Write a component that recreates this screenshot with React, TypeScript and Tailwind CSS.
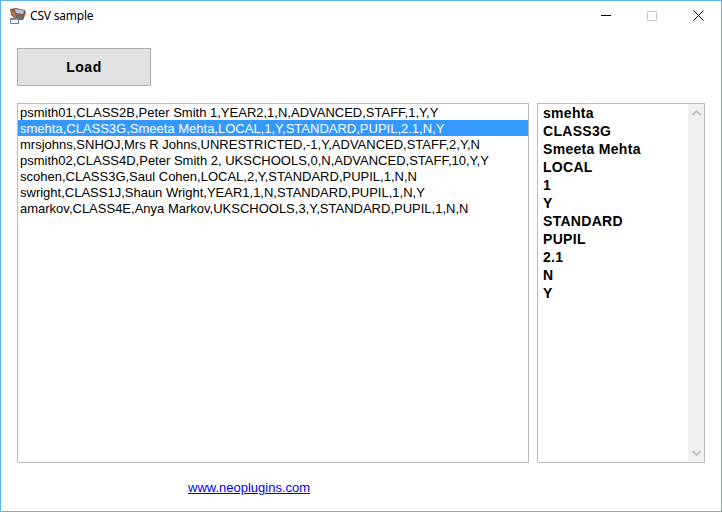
const rows = [
  'psmith01,CLASS2B,Peter Smith 1,YEAR2,1,N,ADVANCED,STAFF,1,Y,Y',
  'smehta,CLASS3G,Smeeta Mehta,LOCAL,1,Y,STANDARD,PUPIL,2.1,N,Y',
  'mrsjohns,SNHOJ,Mrs R Johns,UNRESTRICTED,-1,Y,ADVANCED,STAFF,2,Y,N',
  'psmith02,CLASS4D,Peter Smith 2, UKSCHOOLS,0,N,ADVANCED,STAFF,10,Y,Y',
  'scohen,CLASS3G,Saul Cohen,LOCAL,2,Y,STANDARD,PUPIL,1,N,N',
  'swright,CLASS1J,Shaun Wright,YEAR1,1,N,STANDARD,PUPIL,1,N,Y',
  'amarkov,CLASS4E,Anya Markov,UKSCHOOLS,3,Y,STANDARD,PUPIL,1,N,N',
];

const fields = ['smehta', 'CLASS3G', 'Smeeta Mehta', 'LOCAL', '1', 'Y', 'STANDARD', 'PUPIL', '2.1', 'N', 'Y'];

function AppIcon() {
  return (
    <svg width="18" height="18" viewBox="0 0 18 18" className="shrink-0">
      <path d="M1 2l6-1 9 2 1 3-3 7H7L2 8z" fill="#8a5a44" />
      <path d="M6 2l9 1.500-1 3.500-7-1z" fill="#a9c8d8" />
      <path d="M2 4l4 1 1 6-3-1z" fill="#b5764f" />
      <path d="M9 8l6 .5-1 4H9z" fill="#6d6a68" />
      <rect x="1.500" y="11.500" width="8" height="5" fill="#f2f4fa" stroke="#6f7f9f" />
      <rect x="2" y="12" width="7" height="1" fill="#7f93c0" />
    </svg>
  );
}

export default function App() {
  return (
    <div className="w-[722px] h-[512px] flex flex-col bg-white border border-[#5fb5ee] font-['Liberation_Sans',Arial,sans-serif] text-black overflow-hidden">
      <div className="h-[29px] flex items-center shrink-0 pl-[8px]">
        <AppIcon />
        <span className="ml-[3px] text-[12px] font-['Noto_Sans',sans-serif] tracking-[-0.2px]">CSV sample</span>
        <div className="ml-auto flex items-center">
          <span className="w-[46px] flex justify-center">
            <span className="block w-[10px] h-px bg-black" />
          </span>
          <span className="w-[46px] flex justify-center">
            <span className="block w-[10px] h-[10px] border border-[#cccccc]" />
          </span>
          <span className="w-[46px] flex justify-center">
            <svg width="11" height="11" viewBox="0 0 11 11">
              <path d="M.5.500l10 10M10.500.500l-10 10" stroke="#111" strokeWidth="1" fill="none" />
            </svg>
          </span>
        </div>
      </div>

      <div className="flex-1 flex flex-col pl-[16px] pr-[16px] pt-[18px]">
        <button className="w-[134px] h-[38px] bg-[#e1e1e1] border border-[#adadad] text-[14px] font-bold tracking-[0.5px] shrink-0">
          Load
        </button>

        <div className="flex gap-[8px] mt-[17px]">
          <div className="w-[512px] h-[360px] border border-[#bcbcbc] text-[13px] leading-[18px]">
            {rows.map((row, i) => (
              <div
                key={row}
                className={i === 1 ? 'h-[16px] pl-[2px] whitespace-pre bg-[#3399ff] text-white' : 'h-[16px] pl-[2px] whitespace-pre'}
              >
                {row}
              </div>
            ))}
          </div>

          <div className="w-[168px] h-[360px] border border-[#bcbcbc] flex text-[14px] font-bold leading-[18px] tracking-[0.3px]">
            <div className="flex-1 pl-[5px]">
              {fields.map((f, i) => (
                <div key={i} className="h-[18px]">{f}</div>
              ))}
            </div>
            <div className="w-[16px] bg-[#f0f0f0] flex flex-col justify-between items-center py-[6px]">
              <svg width="9" height="6" viewBox="0 0 9 6">
                <path d="M.5 5l4-4 4 4" stroke="#c4c4c4" strokeWidth="2" fill="none" />
              </svg>
              <svg width="9" height="6" viewBox="0 0 9 6">
                <path d="M.5 1l4 4 4-4" stroke="#c4c4c4" strokeWidth="2" fill="none" />
              </svg>
            </div>
          </div>
        </div>

        <div className="pl-[171px] mt-[17px]">
          <a className="block text-[13px] leading-[16px] text-[#0000ee] underline">www.neoplugins.com</a>
        </div>
      </div>
    </div>
  );
}
